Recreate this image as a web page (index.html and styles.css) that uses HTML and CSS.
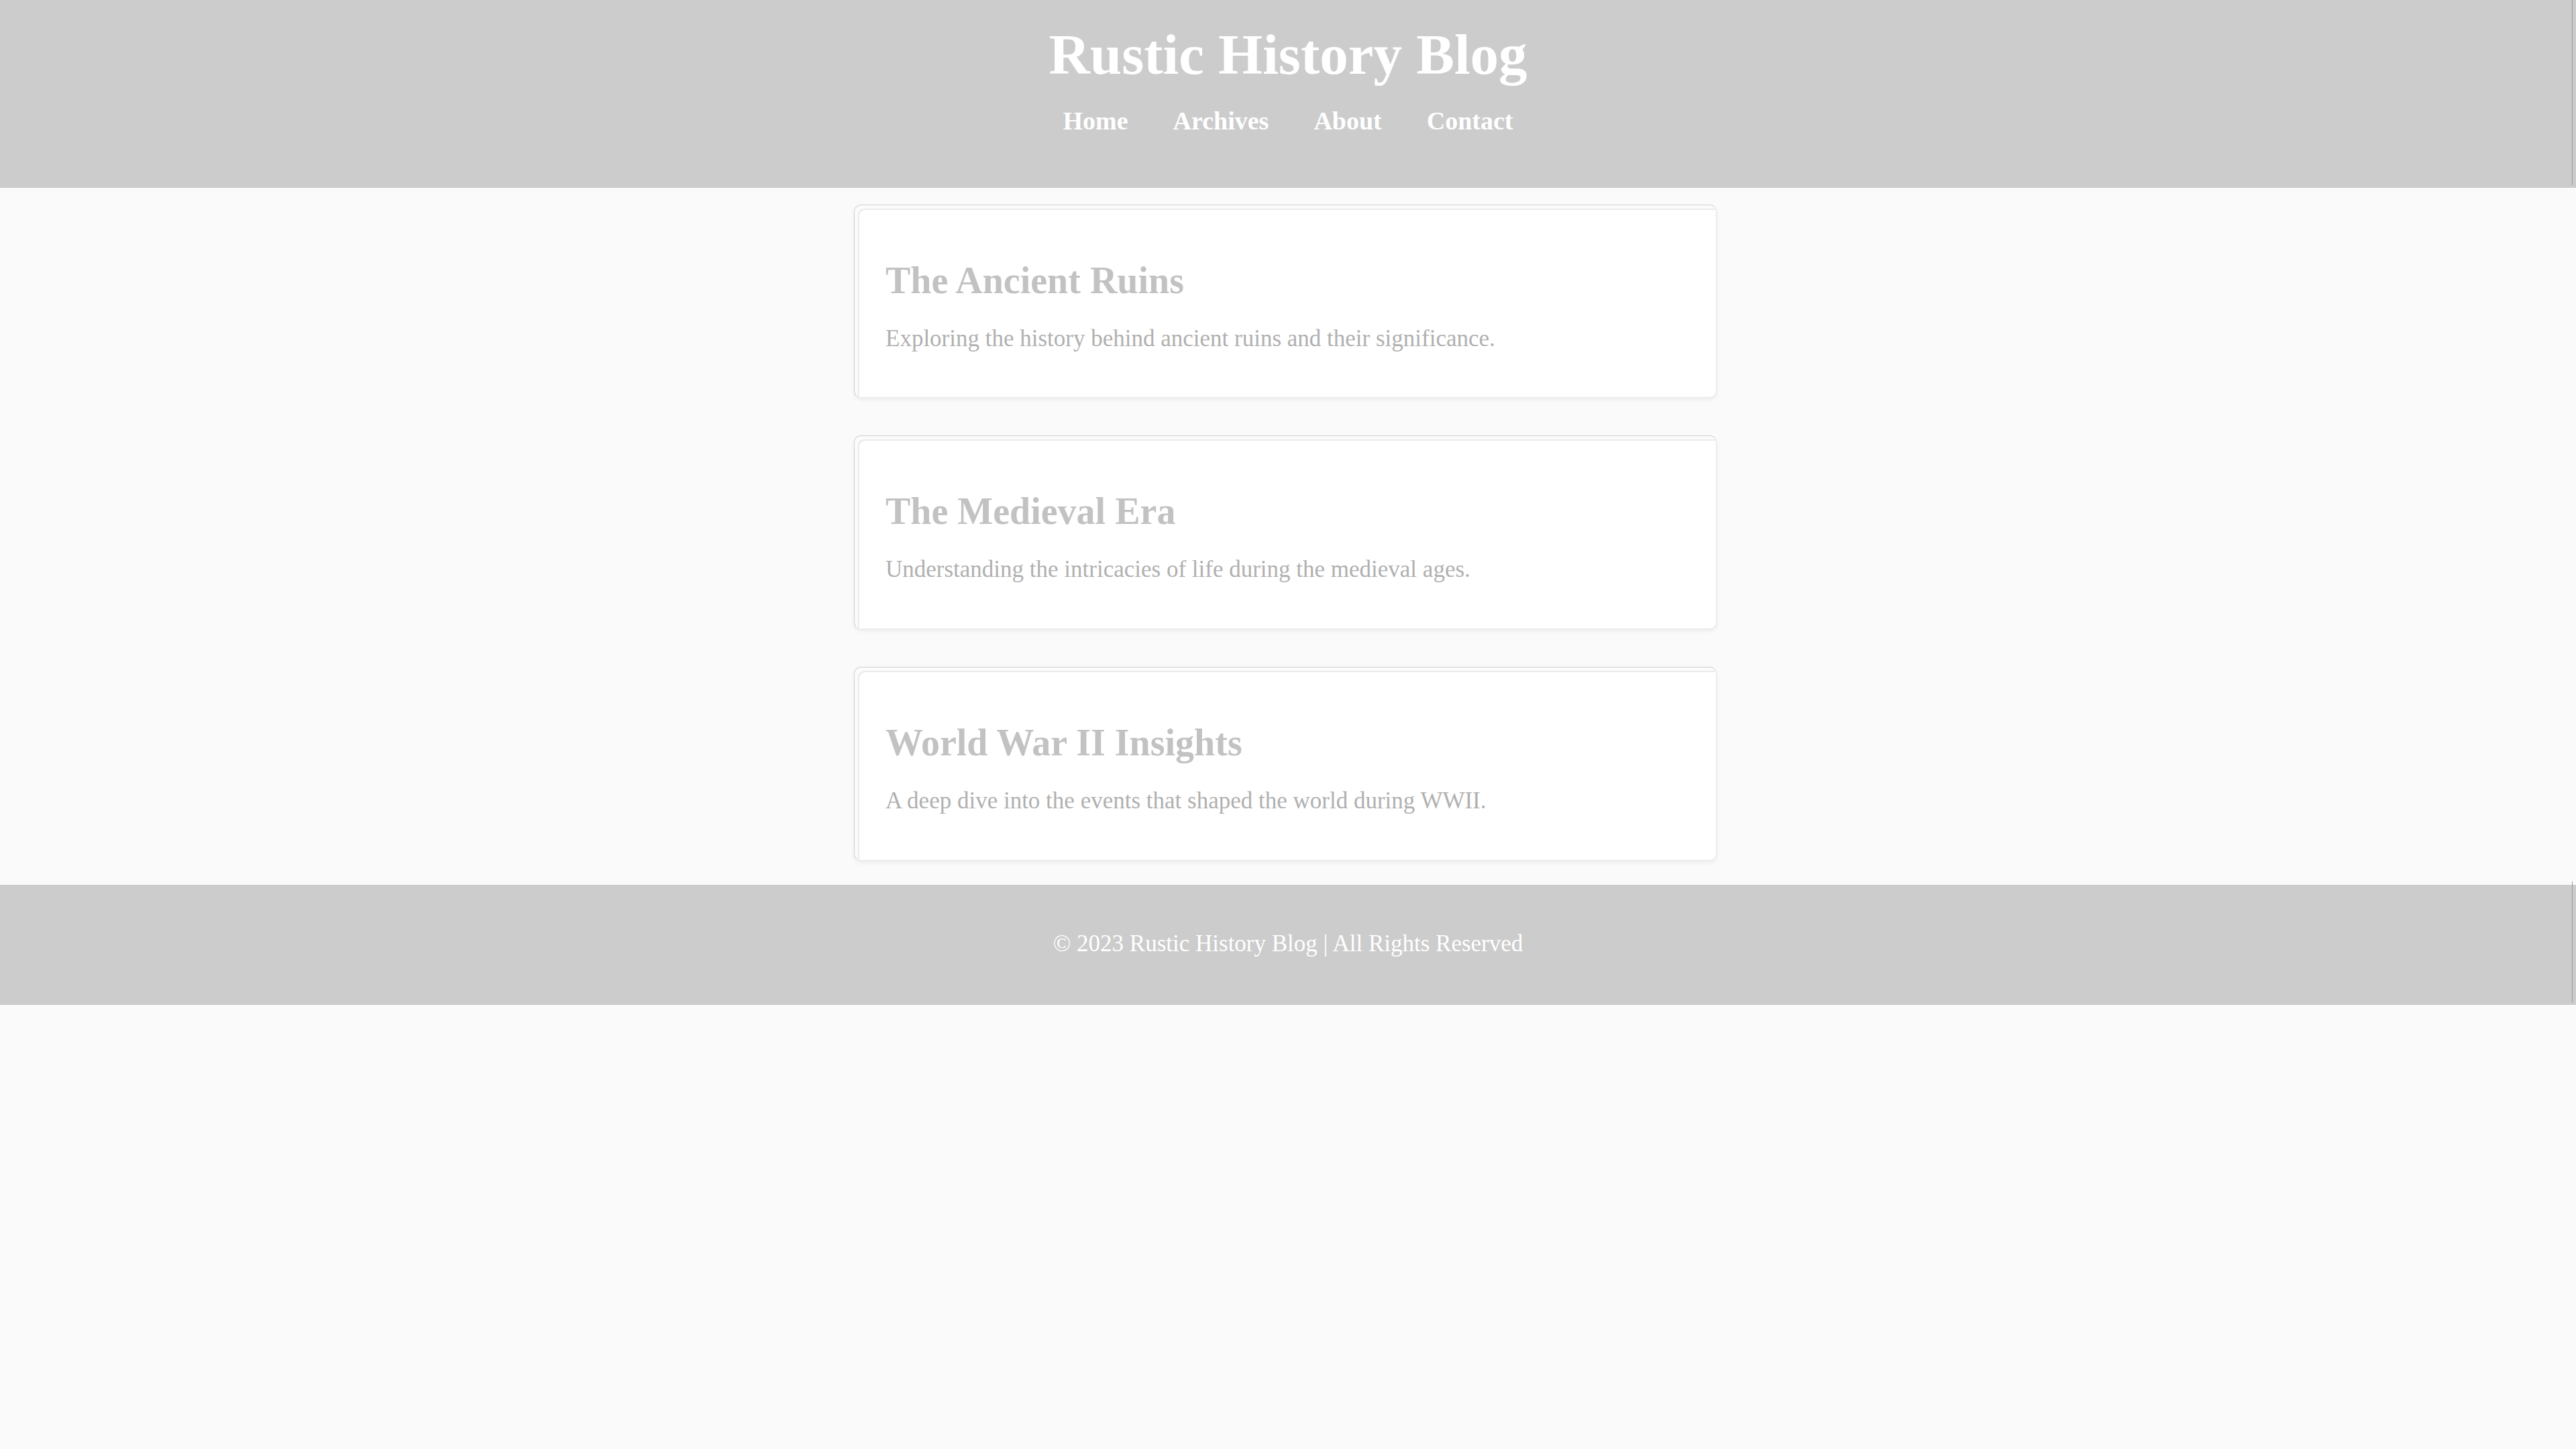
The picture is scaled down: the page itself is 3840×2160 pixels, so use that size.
FILE: index.html
```html
<!DOCTYPE html>
<html lang="en">
<head>
<meta charset="utf-8">
<title>Rustic History Blog</title>
<link rel="stylesheet" href="styles.css">
</head>
<body>
<header class="site-header">
  <h1 class="site-title">Rustic History Blog</h1>
  <nav class="site-nav">
    <a href="#">Home</a>
    <a href="#">Archives</a>
    <a href="#">About</a>
    <a href="#">Contact</a>
  </nav>
</header>
<main class="posts">
  <article class="post">
    <h2 class="post-title">The Ancient Ruins</h2>
    <p class="post-text">Exploring the history behind ancient ruins and their significance.</p>
  </article>
  <article class="post">
    <h2 class="post-title">The Medieval Era</h2>
    <p class="post-text">Understanding the intricacies of life during the medieval ages.</p>
  </article>
  <article class="post">
    <h2 class="post-title">World War II Insights</h2>
    <p class="post-text">A deep dive into the events that shaped the world during WWII.</p>
  </article>
</main>
<footer class="site-footer">
  <p class="footer-text">© 2023 Rustic History Blog | All Rights Reserved</p>
</footer>
</body>
</html>
```

FILE: styles.css
```css
html, body {
  margin: 0;
  padding: 0;
}

body {
  background: #fafafa;
  font-family: Georgia, "Liberation Serif", serif;
  color: #b0b0b0;
}

.site-header {
  position: relative;
  background: #cccccc;
  padding: 30px 0 76px;
  text-align: center;
}

.site-header::after,
.site-footer::after {
  content: "";
  position: absolute;
  right: 5px;
  top: -5px;
  bottom: 4px;
  width: 1px;
  background: #9a9a9a;
}

.site-title {
  margin: 0;
  font-size: 85px;
  line-height: 1.2;
  font-weight: bold;
  color: #ffffff;
}

.site-nav {
  margin-top: 26px;
  display: flex;
  justify-content: center;
  gap: 67px;
  font-size: 38px;
  line-height: 1.2;
}

.site-nav a {
  color: #ffffff;
  font-weight: bold;
  text-decoration: none;
}

.posts {
  width: 1286px;
  margin: 0 auto;
  padding: 25px 0 36px;
  display: flex;
  flex-direction: column;
  gap: 56px;
  transform: translateX(-4px);
}

.post {
  background: #ffffff;
  border: 1px solid #d2d2d2;
  border-right-color: #e6e6e6;
  border-bottom-color: #e6e6e6;
  border-radius: 10px;
  padding: 79px 46px 61px;
  box-shadow: inset 5px 5px 0 #fbfbfb, inset 7px 7px 0 #ececec, 0 3px 6px rgba(0, 0, 0, 0.06);
}

.post-title {
  margin: 0;
  font-size: 56px;
  line-height: 1.2;
  font-weight: bold;
  color: #c2c2c2;
}

.post-text {
  margin: 27px 0 0;
  font-size: 35px;
  line-height: 1.5;
  color: #b0b0b0;
}

.site-footer {
  position: relative;
  background: #cccccc;
  padding: 62px 0 65px;
  text-align: center;
}

.footer-text {
  margin: 0;
  font-size: 35px;
  line-height: 1.5;
  color: #ffffff;
}
```
